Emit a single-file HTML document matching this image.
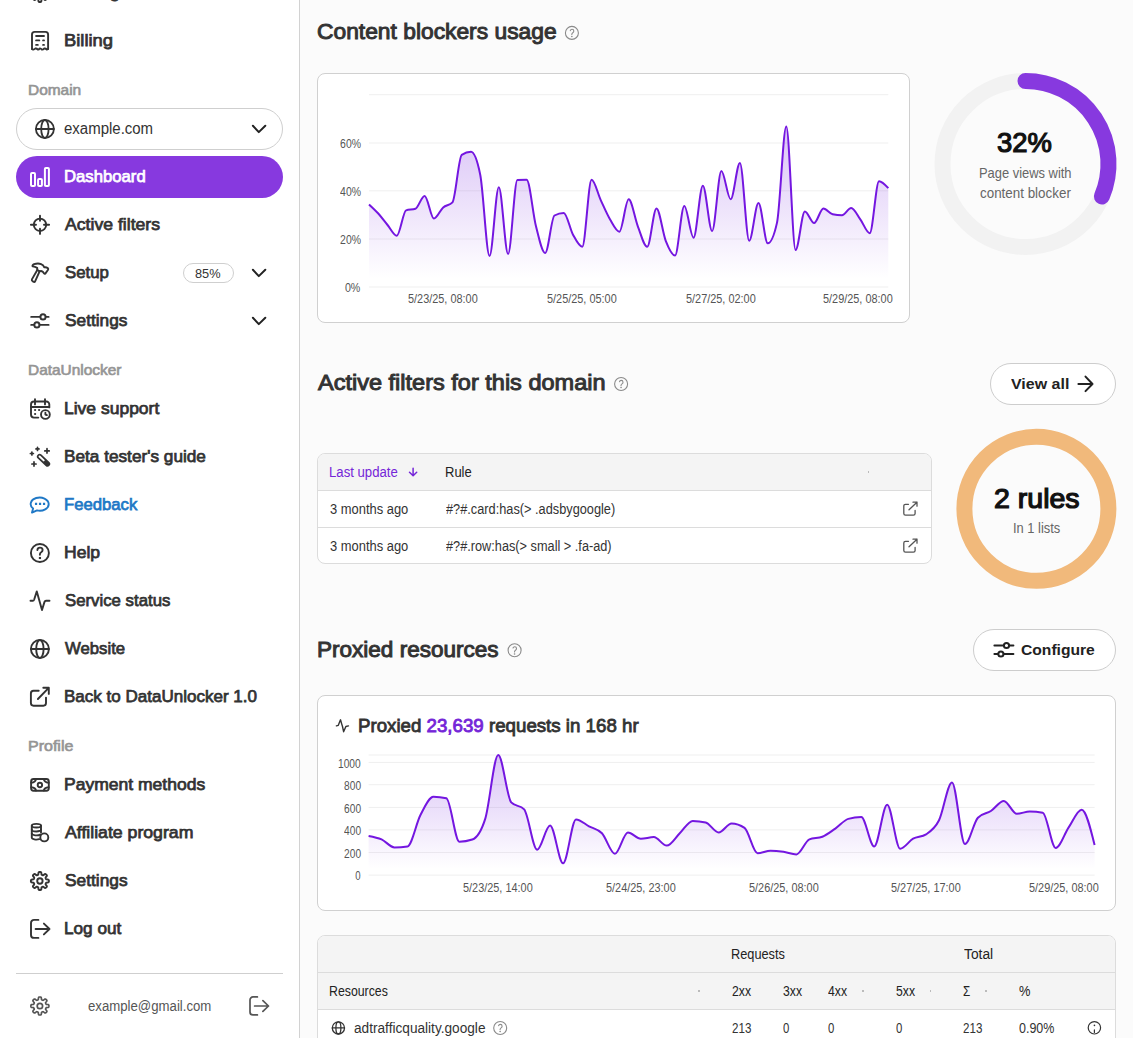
<!DOCTYPE html><html><head><meta charset="utf-8"><style>html,body{margin:0;padding:0}body{width:1133px;height:1038px;overflow:hidden;position:relative;background:#fbfbfb;font-family:'Liberation Sans', sans-serif}</style></head><body><div style="position:absolute;left:0;top:0;width:299px;height:1038px;background:#fff;border-right:1px solid #d2d2d2"></div><svg style="position:absolute;left:26px;top:-22px;overflow:visible" width="28" height="28" viewBox="0 0 28 28" fill="none" stroke="#333333" stroke-width="1.9" stroke-linecap="round" stroke-linejoin="round"><path d="M13.90,6.00L14.25,6.01L14.60,6.05L14.95,6.17L15.24,6.53L15.40,7.45L15.49,8.36L15.67,8.74L15.89,8.89L16.12,8.99L16.35,9.09L16.58,9.18L16.82,9.28L17.08,9.33L17.47,9.18L18.18,8.60L18.94,8.06L19.41,8.01L19.73,8.17L20.01,8.39L20.26,8.64L20.51,8.89L20.73,9.17L20.89,9.49L20.84,9.96L20.30,10.72L19.72,11.43L19.57,11.82L19.62,12.08L19.72,12.32L19.81,12.55L19.91,12.78L20.01,13.01L20.16,13.23L20.54,13.41L21.45,13.50L22.37,13.66L22.73,13.95L22.85,14.30L22.89,14.65L22.90,15.00L22.89,15.35L22.85,15.70L22.73,16.05L22.37,16.34L21.45,16.50L20.54,16.59L20.16,16.77L20.01,16.99L19.91,17.22L19.81,17.45L19.72,17.68L19.62,17.92L19.57,18.18L19.72,18.57L20.30,19.28L20.84,20.04L20.89,20.51L20.73,20.83L20.51,21.11L20.26,21.36L20.01,21.61L19.73,21.83L19.41,21.99L18.94,21.94L18.18,21.40L17.47,20.82L17.08,20.67L16.82,20.72L16.58,20.82L16.35,20.91L16.12,21.01L15.89,21.11L15.67,21.26L15.49,21.64L15.40,22.55L15.24,23.47L14.95,23.83L14.60,23.95L14.25,23.99L13.90,24.00L13.55,23.99L13.20,23.95L12.85,23.83L12.56,23.47L12.40,22.55L12.31,21.64L12.13,21.26L11.91,21.11L11.68,21.01L11.45,20.91L11.22,20.82L10.98,20.72L10.72,20.67L10.33,20.82L9.62,21.40L8.86,21.94L8.39,21.99L8.07,21.83L7.79,21.61L7.54,21.36L7.29,21.11L7.07,20.83L6.91,20.51L6.96,20.04L7.50,19.28L8.08,18.57L8.23,18.18L8.18,17.92L8.08,17.68L7.99,17.45L7.89,17.22L7.79,16.99L7.64,16.77L7.26,16.59L6.35,16.50L5.43,16.34L5.07,16.05L4.95,15.70L4.91,15.35L4.90,15.00L4.91,14.65L4.95,14.30L5.07,13.95L5.43,13.66L6.35,13.50L7.26,13.41L7.64,13.23L7.79,13.01L7.89,12.78L7.99,12.55L8.08,12.32L8.18,12.08L8.23,11.82L8.08,11.43L7.50,10.72L6.96,9.96L6.91,9.49L7.07,9.17L7.29,8.89L7.54,8.64L7.79,8.39L8.07,8.17L8.39,8.01L8.86,8.06L9.62,8.60L10.33,9.18L10.72,9.33L10.98,9.28L11.22,9.18L11.45,9.09L11.68,8.99L11.91,8.89L12.13,8.74L12.31,8.36L12.40,7.45L12.56,6.53L12.85,6.17L13.20,6.05L13.55,6.01Z"/><circle cx="13.9" cy="15" r="2.7"/></svg><svg style="position:absolute;left:26px;top:26px;overflow:visible" width="28" height="28" viewBox="0 0 28 28" fill="none" stroke="#333333" stroke-width="1.9" stroke-linecap="round" stroke-linejoin="round"><path d="M6,23V8.5a2.6,2.6 0 0 1 2.6,-2.6H19.5a2.6,2.6 0 0 1 2.6,2.6V23"/><path d="M22.1,23L20.8,23.6Q19.6,22.2 18.3,22.5Q17,23.8 15.9,23.6Q14.8,22.2 13.8,22.4Q12.8,23.8 11.9,23.6Q10.6,22.2 9.3,22.5Q8.2,23.8 7.1,23.6L6,23"/><path d="M10.1,10H18M10.1,14.4H13.3M17.1,14.4H18M10.1,18.9H11.8M17.1,18.9H18"/></svg><div style="position:absolute;left:16px;top:108px;width:265px;height:40px;border:1px solid #cfcfcf;border-radius:21px;background:#fff"></div><svg style="position:absolute;left:31.1px;top:114px;overflow:visible" width="28" height="28" viewBox="0 0 28 28" fill="none" stroke="#333333" stroke-width="1.8" stroke-linecap="round" stroke-linejoin="round"><circle cx="13.9" cy="15" r="9"/><path d="M5,15H22.8"/><ellipse cx="13.9" cy="15" rx="3.7" ry="9"/></svg><svg style="position:absolute;left:244px;top:112px;overflow:visible" width="28" height="28" viewBox="0 0 28 28" fill="none" stroke="#222" stroke-width="2" stroke-linecap="round" stroke-linejoin="round"><path d="M8.9,13.8L14.8,20.1L21.3,13.8"/></svg><div style="position:absolute;left:16px;top:156px;width:267px;height:42px;border-radius:21px;background:#8739df"></div><svg style="position:absolute;left:26px;top:163px;overflow:visible" width="28" height="28" viewBox="0 0 28 28" fill="none" stroke="#fff" stroke-width="2" stroke-linecap="round" stroke-linejoin="round"><rect x="5" y="9.9" width="4" height="13" rx="1"/><rect x="12.1" y="16" width="3.8" height="6.9" rx="1"/><rect x="18.9" y="5" width="4" height="17.9" rx="1"/></svg><svg style="position:absolute;left:26px;top:210px;overflow:visible" width="28" height="28" viewBox="0 0 28 28" fill="none" stroke="#333333" stroke-width="1.9" stroke-linecap="round" stroke-linejoin="round"><circle cx="14" cy="14.8" r="6.2"/><path d="M14,5.7V10.8M14,18.8V23.9M4.9,14.8H10M18,14.8H23.1"/></svg><svg style="position:absolute;left:26px;top:258px;overflow:visible" width="28" height="28" viewBox="0 0 28 28" fill="none" stroke="#333333" stroke-width="1.9" stroke-linecap="round" stroke-linejoin="round"><path d="M11.3,12L11.2,9.8Q9,8.9 6.8,8.4Q5.6,7.6 8.1,6.2Q12,4.8 15.1,6.1Q17.6,7.2 18.2,9.3Q20.2,8.9 22,10.3Q22.6,11 21.9,12L19.3,15.6Q18.7,16.2 18.1,15.5L16.7,13.7Q15.3,12.5 13.6,13.3Z"/><path d="M11.3,12L5.9,21.4Q5.4,22.7 6.8,23.4L7.8,23.9Q8.7,24.2 9.1,23.3L13.6,13.3"/></svg><div style="position:absolute;left:182.5px;top:263px;width:49px;height:18px;border:1px solid #cfcfcf;border-radius:10px;background:#fff"></div><svg style="position:absolute;left:244px;top:256px;overflow:visible" width="28" height="28" viewBox="0 0 28 28" fill="none" stroke="#222" stroke-width="2" stroke-linecap="round" stroke-linejoin="round"><path d="M8.9,13.8L14.8,20.1L21.3,13.8"/></svg><svg style="position:absolute;left:26px;top:306px;overflow:visible" width="28" height="28" viewBox="0 0 28 28" fill="none" stroke="#333333" stroke-width="1.9" stroke-linecap="round" stroke-linejoin="round"><path d="M5.2,10.9H14.3M19.7,10.9H22.6M5.2,18.9H8.3M13.5,18.9H22.6"/><circle cx="17" cy="10.9" r="2.6"/><circle cx="10.9" cy="18.9" r="2.6"/></svg><svg style="position:absolute;left:244px;top:304px;overflow:visible" width="28" height="28" viewBox="0 0 28 28" fill="none" stroke="#222" stroke-width="2" stroke-linecap="round" stroke-linejoin="round"><path d="M8.9,13.8L14.8,20.1L21.3,13.8"/></svg><svg style="position:absolute;left:26px;top:394px;overflow:visible" width="28" height="28" viewBox="0 0 28 28" fill="none" stroke="#333333" stroke-width="1.9" stroke-linecap="round" stroke-linejoin="round"><path d="M12.3,23.6H8a3,3 0 0 1 -3,-3V10.5a3,3 0 0 1 3,-3H20.4a2.9,2.9 0 0 1 2.9,2.9V13.4"/><path d="M9,5.2V10.4M19,5.2V10.4M5,13H23.2"/><circle cx="19.4" cy="20.5" r="4.4"/><path d="M19.4,18.7V20.5L20.9,21.1"/><path d="M9,15.9h.2M13,15.9h.2M9,20h.2" stroke-width="2"/></svg><svg style="position:absolute;left:26px;top:442px;overflow:visible" width="28" height="28" viewBox="0 0 28 28" fill="none" stroke="#333333" stroke-width="1.9" stroke-linecap="round" stroke-linejoin="round"><path d="M13.6,14.5L21.5,22" stroke-width="5.4"/><path d="M13.6,14.5L17.7,18.4" stroke="#fff" stroke-width="2"/><path d="M10.0,6.9H13.0M11.5,5.4V8.400000000000002" stroke-width="1.7"/><path d="M18.8,8.9H23.2M21,6.7V11.100000000000001" stroke-width="1.7"/><path d="M4.4,11.5H7.400000000000001M5.9,10.0V13.0" stroke-width="1.7"/><path d="M5.9,22H10.100000000000001M8,19.9V24.1" stroke-width="1.7"/></svg><svg style="position:absolute;left:26px;top:490px;overflow:visible" width="28" height="28" viewBox="0 0 28 28" fill="none" stroke="#1f78c6" stroke-width="1.9" stroke-linecap="round" stroke-linejoin="round"><path d="M11,20.4A9,6.6 0 1 0 7.1,18.6L6,22.6Z"/><path d="M10,13.9h.1M14,13.9h.1M18,13.9h.1" stroke-width="2.1" stroke-linecap="square"/></svg><svg style="position:absolute;left:26px;top:538px;overflow:visible" width="28" height="28" viewBox="0 0 28 28" fill="none" stroke="#333333" stroke-width="1.9" stroke-linecap="round" stroke-linejoin="round"><circle cx="13.9" cy="15" r="9"/><path d="M11.4,12Q11.6,9.6 13.9,9.6Q16.5,9.6 16.6,11.9Q16.6,13.3 15.2,14.2Q13.9,15 13.9,16.4V16.8"/><path d="M13.9,20h.1" stroke-width="2.1" stroke-linecap="square"/></svg><svg style="position:absolute;left:26px;top:586px;overflow:visible" width="28" height="28" viewBox="0 0 28 28" fill="none" stroke="#333333" stroke-width="1.9" stroke-linecap="round" stroke-linejoin="round"><path d="M4.5,14.8H6.8Q7.7,14.8 8.1,13.7L10.8,5.4L16,24L18.5,15.9Q18.9,14.8 20,14.8H23.5"/></svg><svg style="position:absolute;left:26px;top:634px;overflow:visible" width="28" height="28" viewBox="0 0 28 28" fill="none" stroke="#333333" stroke-width="1.9" stroke-linecap="round" stroke-linejoin="round"><circle cx="13.9" cy="15" r="9"/><path d="M5,15H22.8"/><ellipse cx="13.9" cy="15" rx="3.7" ry="9"/></svg><svg style="position:absolute;left:26px;top:682px;overflow:visible" width="28" height="28" viewBox="0 0 28 28" fill="none" stroke="#333333" stroke-width="1.9" stroke-linecap="round" stroke-linejoin="round"><path d="M12.7,8.8H7.5a2.6,2.6 0 0 0 -2.6,2.6V21.1a2.6,2.6 0 0 0 2.6,2.6H17.4a2.6,2.6 0 0 0 2.6,-2.6V15.6"/><path d="M11.9,17L22.7,5.9M17.3,5.8H22.8V11.9"/></svg><svg style="position:absolute;left:26px;top:770px;overflow:visible" width="28" height="28" viewBox="0 0 28 28" fill="none" stroke="#333333" stroke-width="1.9" stroke-linecap="round" stroke-linejoin="round"><rect x="5.1" y="9" width="17.7" height="11.7" rx="2.5"/><circle cx="13.9" cy="15" r="2.2"/><path d="M10,9.2Q9.5,12.4 5.3,12.7M17.8,9.2Q18.3,12.4 22.6,12.7M10,20.5Q9.5,17.5 5.3,17.2M17.8,20.5Q18.3,17.5 22.6,17.2"/></svg><svg style="position:absolute;left:26px;top:818px;overflow:visible" width="28" height="28" viewBox="0 0 28 28" fill="none" stroke="#333333" stroke-width="1.9" stroke-linecap="round" stroke-linejoin="round"><ellipse cx="10.4" cy="7.7" rx="4.6" ry="1.8"/><path d="M5.8,7.7V19.8A4.6,1.8 0 0 0 13.2,21.2M15,7.7V14.6"/><path d="M5.8,11.7A4.6,1.8 0 0 0 15,11.7M5.8,15.7A4.6,1.8 0 0 0 14.2,16.6"/><circle cx="18.3" cy="19.4" r="4"/></svg><svg style="position:absolute;left:26px;top:866px;overflow:visible" width="28" height="28" viewBox="0 0 28 28" fill="none" stroke="#333333" stroke-width="1.9" stroke-linecap="round" stroke-linejoin="round"><path d="M13.90,6.00L14.25,6.01L14.60,6.05L14.95,6.17L15.24,6.53L15.40,7.45L15.49,8.36L15.67,8.74L15.89,8.89L16.12,8.99L16.35,9.09L16.58,9.18L16.82,9.28L17.08,9.33L17.47,9.18L18.18,8.60L18.94,8.06L19.41,8.01L19.73,8.17L20.01,8.39L20.26,8.64L20.51,8.89L20.73,9.17L20.89,9.49L20.84,9.96L20.30,10.72L19.72,11.43L19.57,11.82L19.62,12.08L19.72,12.32L19.81,12.55L19.91,12.78L20.01,13.01L20.16,13.23L20.54,13.41L21.45,13.50L22.37,13.66L22.73,13.95L22.85,14.30L22.89,14.65L22.90,15.00L22.89,15.35L22.85,15.70L22.73,16.05L22.37,16.34L21.45,16.50L20.54,16.59L20.16,16.77L20.01,16.99L19.91,17.22L19.81,17.45L19.72,17.68L19.62,17.92L19.57,18.18L19.72,18.57L20.30,19.28L20.84,20.04L20.89,20.51L20.73,20.83L20.51,21.11L20.26,21.36L20.01,21.61L19.73,21.83L19.41,21.99L18.94,21.94L18.18,21.40L17.47,20.82L17.08,20.67L16.82,20.72L16.58,20.82L16.35,20.91L16.12,21.01L15.89,21.11L15.67,21.26L15.49,21.64L15.40,22.55L15.24,23.47L14.95,23.83L14.60,23.95L14.25,23.99L13.90,24.00L13.55,23.99L13.20,23.95L12.85,23.83L12.56,23.47L12.40,22.55L12.31,21.64L12.13,21.26L11.91,21.11L11.68,21.01L11.45,20.91L11.22,20.82L10.98,20.72L10.72,20.67L10.33,20.82L9.62,21.40L8.86,21.94L8.39,21.99L8.07,21.83L7.79,21.61L7.54,21.36L7.29,21.11L7.07,20.83L6.91,20.51L6.96,20.04L7.50,19.28L8.08,18.57L8.23,18.18L8.18,17.92L8.08,17.68L7.99,17.45L7.89,17.22L7.79,16.99L7.64,16.77L7.26,16.59L6.35,16.50L5.43,16.34L5.07,16.05L4.95,15.70L4.91,15.35L4.90,15.00L4.91,14.65L4.95,14.30L5.07,13.95L5.43,13.66L6.35,13.50L7.26,13.41L7.64,13.23L7.79,13.01L7.89,12.78L7.99,12.55L8.08,12.32L8.18,12.08L8.23,11.82L8.08,11.43L7.50,10.72L6.96,9.96L6.91,9.49L7.07,9.17L7.29,8.89L7.54,8.64L7.79,8.39L8.07,8.17L8.39,8.01L8.86,8.06L9.62,8.60L10.33,9.18L10.72,9.33L10.98,9.28L11.22,9.18L11.45,9.09L11.68,8.99L11.91,8.89L12.13,8.74L12.31,8.36L12.40,7.45L12.56,6.53L12.85,6.17L13.20,6.05L13.55,6.01Z"/><circle cx="13.9" cy="15" r="2.7"/></svg><svg style="position:absolute;left:26px;top:914px;overflow:visible" width="28" height="28" viewBox="0 0 28 28" fill="none" stroke="#333333" stroke-width="1.9" stroke-linecap="round" stroke-linejoin="round"><path d="M12.4,5.9H8a3,3 0 0 0 -3,3V20.9a3,3 0 0 0 3,3H12.4"/><path d="M9.6,15H23.5M17.9,9.6L23.5,15L17.9,20.4"/></svg><div style="position:absolute;left:16px;top:973px;width:267px;height:1px;background:#cfcfcf"></div><svg style="position:absolute;left:26px;top:991.2px;overflow:visible" width="28" height="28" viewBox="0 0 28 28" fill="none" stroke="#555" stroke-width="1.7" stroke-linecap="round" stroke-linejoin="round"><path d="M13.90,6.00L14.25,6.01L14.60,6.05L14.95,6.17L15.24,6.53L15.40,7.45L15.49,8.36L15.67,8.74L15.89,8.89L16.12,8.99L16.35,9.09L16.58,9.18L16.82,9.28L17.08,9.33L17.47,9.18L18.18,8.60L18.94,8.06L19.41,8.01L19.73,8.17L20.01,8.39L20.26,8.64L20.51,8.89L20.73,9.17L20.89,9.49L20.84,9.96L20.30,10.72L19.72,11.43L19.57,11.82L19.62,12.08L19.72,12.32L19.81,12.55L19.91,12.78L20.01,13.01L20.16,13.23L20.54,13.41L21.45,13.50L22.37,13.66L22.73,13.95L22.85,14.30L22.89,14.65L22.90,15.00L22.89,15.35L22.85,15.70L22.73,16.05L22.37,16.34L21.45,16.50L20.54,16.59L20.16,16.77L20.01,16.99L19.91,17.22L19.81,17.45L19.72,17.68L19.62,17.92L19.57,18.18L19.72,18.57L20.30,19.28L20.84,20.04L20.89,20.51L20.73,20.83L20.51,21.11L20.26,21.36L20.01,21.61L19.73,21.83L19.41,21.99L18.94,21.94L18.18,21.40L17.47,20.82L17.08,20.67L16.82,20.72L16.58,20.82L16.35,20.91L16.12,21.01L15.89,21.11L15.67,21.26L15.49,21.64L15.40,22.55L15.24,23.47L14.95,23.83L14.60,23.95L14.25,23.99L13.90,24.00L13.55,23.99L13.20,23.95L12.85,23.83L12.56,23.47L12.40,22.55L12.31,21.64L12.13,21.26L11.91,21.11L11.68,21.01L11.45,20.91L11.22,20.82L10.98,20.72L10.72,20.67L10.33,20.82L9.62,21.40L8.86,21.94L8.39,21.99L8.07,21.83L7.79,21.61L7.54,21.36L7.29,21.11L7.07,20.83L6.91,20.51L6.96,20.04L7.50,19.28L8.08,18.57L8.23,18.18L8.18,17.92L8.08,17.68L7.99,17.45L7.89,17.22L7.79,16.99L7.64,16.77L7.26,16.59L6.35,16.50L5.43,16.34L5.07,16.05L4.95,15.70L4.91,15.35L4.90,15.00L4.91,14.65L4.95,14.30L5.07,13.95L5.43,13.66L6.35,13.50L7.26,13.41L7.64,13.23L7.79,13.01L7.89,12.78L7.99,12.55L8.08,12.32L8.18,12.08L8.23,11.82L8.08,11.43L7.50,10.72L6.96,9.96L6.91,9.49L7.07,9.17L7.29,8.89L7.54,8.64L7.79,8.39L8.07,8.17L8.39,8.01L8.86,8.06L9.62,8.60L10.33,9.18L10.72,9.33L10.98,9.28L11.22,9.18L11.45,9.09L11.68,8.99L11.91,8.89L12.13,8.74L12.31,8.36L12.40,7.45L12.56,6.53L12.85,6.17L13.20,6.05L13.55,6.01Z"/><circle cx="13.9" cy="15" r="2.7"/></svg><svg style="position:absolute;left:245px;top:991px;overflow:visible" width="28" height="28" viewBox="0 0 28 28" fill="none" stroke="#555" stroke-width="1.7" stroke-linecap="round" stroke-linejoin="round"><path d="M12.4,5.9H8a3,3 0 0 0 -3,3V20.9a3,3 0 0 0 3,3H12.4"/><path d="M9.6,15H23.5M17.9,9.6L23.5,15L17.9,20.4"/></svg><svg style="position:absolute;left:0;top:0" width="1133" height="1038" viewBox="0 0 1133 1038" fill="none" stroke="#8a8a8a" stroke-width="1.1" stroke-linecap="round" stroke-linejoin="round"><circle cx="571.9" cy="32.9" r="6.5"/><path d="M570.30,30.60Q570.70,29.30 572.00,29.30Q573.80,29.30 573.80,31.10Q573.80,32.20 572.80,32.80Q571.80,33.40 571.80,34.50"/><path d="M571.80,36.50h.1" stroke-width="1.54"/></svg><div style="position:absolute;left:317px;top:73px;width:591px;height:248px;border:1px solid #d0d0d0;border-radius:8px;background:#fff"></div><svg style="position:absolute;left:0;top:0" width="1133" height="1038" viewBox="0 0 1133 1038" fill="none" stroke="#8a8a8a" stroke-width="1.1" stroke-linecap="round" stroke-linejoin="round"><circle cx="621.1" cy="384" r="6.5"/><path d="M619.50,381.70Q619.90,380.40 621.20,380.40Q623.00,380.40 623.00,382.20Q623.00,383.30 622.00,383.90Q621.00,384.50 621.00,385.60"/><path d="M621.00,387.60h.1" stroke-width="1.54"/></svg><div style="position:absolute;left:990px;top:363px;width:124px;height:40px;border:1px solid #cdcdcd;border-radius:21px;background:#fff"></div><svg style="position:absolute;left:0;top:0" width="1133" height="1038" viewBox="0 0 1133 1038" fill="none" stroke="#222" stroke-width="2" stroke-linecap="round" stroke-linejoin="round"><path d="M1078.4,384H1092.5M1085.5,376.6L1092.5,384L1085.5,391.1"/></svg><div style="position:absolute;left:317px;top:453px;width:613px;height:109px;border:1px solid #dcdcdc;border-radius:8px;background:#fff;overflow:hidden"><div style="position:absolute;left:0;top:0;width:100%;height:36px;background:#f4f4f4;border-bottom:1px solid #dcdcdc"></div><div style="position:absolute;left:0;top:73px;width:100%;height:1px;background:#dcdcdc"></div></div><div style="position:absolute;left:867.5px;top:471px;width:1.5px;height:1.5px;background:#bbb"></div><svg style="position:absolute;left:0;top:0" width="1133" height="1038" viewBox="0 0 1133 1038" fill="none" stroke="#7526d8" stroke-width="1.5" stroke-linecap="round" stroke-linejoin="round"><path d="M413.1,468.3V475.5M409.5,472.2L413.1,475.7L416.7,472.2"/></svg><svg style="position:absolute;left:0;top:0" width="1133" height="1038" viewBox="0 0 1133 1038" fill="none" stroke="#555" stroke-width="1.3" stroke-linecap="round" stroke-linejoin="round"><path d="M908.5,504.3H905.5a1.7,1.7 0 0 0 -1.7,1.7V513.4a1.7,1.7 0 0 0 1.7,1.7H913.4a1.7,1.7 0 0 0 1.7,-1.7V510.5M909,509.8L917,502.2M913,502.2H917V506.2"/></svg><svg style="position:absolute;left:0;top:0" width="1133" height="1038" viewBox="0 0 1133 1038" fill="none" stroke="#555" stroke-width="1.3" stroke-linecap="round" stroke-linejoin="round"><path d="M908.5,541.3H905.5a1.7,1.7 0 0 0 -1.7,1.7V550.4a1.7,1.7 0 0 0 1.7,1.7H913.4a1.7,1.7 0 0 0 1.7,-1.7V547.5M909,546.8L917,539.2M913,539.2H917V543.2"/></svg><svg style="position:absolute;left:0;top:0" width="1133" height="1038" viewBox="0 0 1133 1038" fill="none" stroke="#8a8a8a" stroke-width="1.1" stroke-linecap="round" stroke-linejoin="round"><circle cx="514.6" cy="650.3" r="6.5"/><path d="M513.00,648.00Q513.40,646.70 514.70,646.70Q516.50,646.70 516.50,648.50Q516.50,649.60 515.50,650.20Q514.50,650.80 514.50,651.90"/><path d="M514.50,653.90h.1" stroke-width="1.54"/></svg><div style="position:absolute;left:973px;top:629px;width:141px;height:40px;border:1px solid #cdcdcd;border-radius:21px;background:#fff"></div><svg style="position:absolute;left:0;top:0" width="1133" height="1038" viewBox="0 0 1133 1038" fill="none" stroke="#222" stroke-width="2" stroke-linecap="round" stroke-linejoin="round"><path d="M994.4,645.5H1003.8M1009.3,645.5H1013.4M994.4,654H998.2M1003.6,654H1013.4"/><circle cx="1006.5" cy="645.5" r="2.6"/><circle cx="1000.9" cy="654" r="2.6"/></svg><div style="position:absolute;left:317px;top:695px;width:797px;height:214px;border:1px solid #d0d0d0;border-radius:8px;background:#fff"></div><svg style="position:absolute;left:0;top:0" width="1133" height="1038" viewBox="0 0 1133 1038" fill="none" stroke="#333" stroke-width="1.4" stroke-linecap="round" stroke-linejoin="round"><path d="M336.4,725.9L338.3,725.3L340.5,719.8L341.6,723.6L342.5,726.5L343.6,731.7L345.9,726.5L348.5,725.9"/></svg><div style="position:absolute;left:317px;top:935px;width:797px;height:120px;border:1px solid #dcdcdc;border-radius:8px;background:#fff;overflow:hidden"><div style="position:absolute;left:0;top:0;width:100%;height:73px;background:#f4f4f4;border-bottom:1px solid #dcdcdc"></div><div style="position:absolute;left:0;top:36px;width:100%;height:1px;background:#dcdcdc"></div></div><div style="position:absolute;left:698.3px;top:990px;width:1.5px;height:1.5px;background:#bbb"></div><div style="position:absolute;left:862.3px;top:990px;width:1.5px;height:1.5px;background:#bbb"></div><div style="position:absolute;left:929.5px;top:990px;width:1.5px;height:1.5px;background:#bbb"></div><div style="position:absolute;left:985.3px;top:990px;width:1.5px;height:1.5px;background:#bbb"></div><svg style="position:absolute;left:0;top:0" width="1133" height="1038" viewBox="0 0 1133 1038" fill="none" stroke="#333" stroke-width="1.3" stroke-linecap="round" stroke-linejoin="round"><circle cx="338.4" cy="1027.9" r="6.1"/><path d="M332.3,1027.9H344.5"/><ellipse cx="338.4" cy="1027.9" rx="2.5" ry="6.1"/></svg><svg style="position:absolute;left:0;top:0" width="1133" height="1038" viewBox="0 0 1133 1038" fill="none" stroke="#8a8a8a" stroke-width="1.1" stroke-linecap="round" stroke-linejoin="round"><circle cx="500.2" cy="1028" r="6.5"/><path d="M498.60,1025.70Q499.00,1024.40 500.30,1024.40Q502.10,1024.40 502.10,1026.20Q502.10,1027.30 501.10,1027.90Q500.10,1028.50 500.10,1029.60"/><path d="M500.10,1031.60h.1" stroke-width="1.54"/></svg><svg style="position:absolute;left:0;top:0" width="1133" height="1038" viewBox="0 0 1133 1038" fill="none" stroke="#333" stroke-width="1.2" stroke-linecap="round" stroke-linejoin="round"><circle cx="1094.4" cy="1027.8" r="6.2"/><path d="M1094.4,1032.4V1029.9"/><path d="M1094.4,1025.4h.05" stroke-width="1.6"/></svg><svg style="position:absolute;left:0;top:0" width="1133" height="1038" viewBox="0 0 1133 1038"><defs><linearGradient id="g1" x1="0" y1="0" x2="0" y2="1"><stop offset="0%" stop-color="#7a2ae0" stop-opacity="0.28"/><stop offset="95%" stop-color="#7a2ae0" stop-opacity="0"/></linearGradient><linearGradient id="g2" x1="0" y1="0" x2="0" y2="1"><stop offset="0%" stop-color="#7a2ae0" stop-opacity="0.28"/><stop offset="95%" stop-color="#7a2ae0" stop-opacity="0"/></linearGradient></defs><line x1="369.0" x2="888.3" y1="94.7" y2="94.7" stroke="#efefef" stroke-width="1"/><line x1="369.0" x2="888.3" y1="143" y2="143" stroke="#efefef" stroke-width="1"/><line x1="369.0" x2="888.3" y1="190.8" y2="190.8" stroke="#efefef" stroke-width="1"/><line x1="369.0" x2="888.3" y1="239" y2="239" stroke="#efefef" stroke-width="1"/><line x1="369.0" x2="888.3" y1="287" y2="287" stroke="#efefef" stroke-width="1"/><line x1="368.6" x2="1094.6" y1="755" y2="755" stroke="#efefef" stroke-width="1"/><line x1="368.6" x2="1094.6" y1="762.4" y2="762.4" stroke="#efefef" stroke-width="1"/><line x1="368.6" x2="1094.6" y1="784.7" y2="784.7" stroke="#efefef" stroke-width="1"/><line x1="368.6" x2="1094.6" y1="807.4" y2="807.4" stroke="#efefef" stroke-width="1"/><line x1="368.6" x2="1094.6" y1="829.9" y2="829.9" stroke="#efefef" stroke-width="1"/><line x1="368.6" x2="1094.6" y1="852.5" y2="852.5" stroke="#efefef" stroke-width="1"/><line x1="368.6" x2="1094.6" y1="875.1" y2="875.1" stroke="#efefef" stroke-width="1"/><path d="M369.00,204.40C372.09,207.23,375.18,210.07,378.27,213.50C381.36,216.93,384.46,221.30,387.55,225.00C390.64,228.70,393.73,235.70,396.82,235.70C399.91,235.70,403.00,211.47,406.09,210.40C409.18,209.33,412.28,209.87,415.37,208.80C418.46,207.73,421.55,195.90,424.64,195.90C427.73,195.90,430.82,218.50,433.91,218.50C437.00,218.50,440.09,210.10,443.19,207.40C446.28,204.70,449.37,205.70,452.46,202.30C455.55,198.90,458.64,156.80,461.73,154.80C464.82,152.80,467.91,151.80,471.01,151.80C474.10,151.80,477.19,159.53,480.28,175.00C483.37,190.47,486.46,256.00,489.55,256.00C492.64,256.00,495.73,187.20,498.82,187.20C501.92,187.20,505.01,254.00,508.10,254.00C511.19,254.00,514.28,180.20,517.37,180.00C520.46,179.80,523.55,179.70,526.64,179.70C529.74,179.70,532.83,213.78,535.92,226.00C539.01,238.22,542.10,253.00,545.19,253.00C548.28,253.00,551.37,217.23,554.46,215.50C557.56,213.77,560.65,212.90,563.74,212.90C566.83,212.90,569.92,229.05,573.01,234.70C576.10,240.35,579.19,246.80,582.28,246.80C585.38,246.80,588.47,179.70,591.56,179.70C594.65,179.70,597.74,193.67,600.83,200.30C603.92,206.93,607.01,214.27,610.10,219.50C613.19,224.73,616.29,231.70,619.38,231.70C622.47,231.70,625.56,199.30,628.65,199.30C631.74,199.30,634.83,218.68,637.92,226.60C641.01,234.52,644.11,246.80,647.20,246.80C650.29,246.80,653.38,208.40,656.47,208.40C659.56,208.40,662.65,232.95,665.74,240.80C668.83,248.65,671.92,255.50,675.02,255.50C678.11,255.50,681.20,206.00,684.29,206.00C687.38,206.00,690.47,237.70,693.56,237.70C696.65,237.70,699.74,185.70,702.84,185.70C705.93,185.70,709.02,231.00,712.11,231.00C715.20,231.00,718.29,171.00,721.38,171.00C724.47,171.00,727.56,199.30,730.66,199.30C733.75,199.30,736.84,162.90,739.93,162.90C743.02,162.90,746.11,240.80,749.20,240.80C752.29,240.80,755.38,203.00,758.47,203.00C761.57,203.00,764.66,243.30,767.75,243.30C770.84,243.30,773.93,236.40,777.02,222.60C780.11,208.80,783.20,126.50,786.29,126.50C789.39,126.50,792.48,250.00,795.57,250.00C798.66,250.00,801.75,211.50,804.84,211.50C807.93,211.50,811.02,223.00,814.11,223.00C817.21,223.00,820.30,208.50,823.39,208.50C826.48,208.50,829.57,213.53,832.66,214.20C835.75,214.87,838.84,215.20,841.93,215.20C845.02,215.20,848.12,207.90,851.21,207.90C854.30,207.90,857.39,215.38,860.48,219.60C863.57,223.82,866.66,233.20,869.75,233.20C872.84,233.20,875.94,181.20,879.03,181.20C882.12,181.20,885.21,184.70,888.30,188.20L888.3,287L369.0,287Z" fill="url(#g1)"/><path d="M369.00,204.40C372.09,207.23,375.18,210.07,378.27,213.50C381.36,216.93,384.46,221.30,387.55,225.00C390.64,228.70,393.73,235.70,396.82,235.70C399.91,235.70,403.00,211.47,406.09,210.40C409.18,209.33,412.28,209.87,415.37,208.80C418.46,207.73,421.55,195.90,424.64,195.90C427.73,195.90,430.82,218.50,433.91,218.50C437.00,218.50,440.09,210.10,443.19,207.40C446.28,204.70,449.37,205.70,452.46,202.30C455.55,198.90,458.64,156.80,461.73,154.80C464.82,152.80,467.91,151.80,471.01,151.80C474.10,151.80,477.19,159.53,480.28,175.00C483.37,190.47,486.46,256.00,489.55,256.00C492.64,256.00,495.73,187.20,498.82,187.20C501.92,187.20,505.01,254.00,508.10,254.00C511.19,254.00,514.28,180.20,517.37,180.00C520.46,179.80,523.55,179.70,526.64,179.70C529.74,179.70,532.83,213.78,535.92,226.00C539.01,238.22,542.10,253.00,545.19,253.00C548.28,253.00,551.37,217.23,554.46,215.50C557.56,213.77,560.65,212.90,563.74,212.90C566.83,212.90,569.92,229.05,573.01,234.70C576.10,240.35,579.19,246.80,582.28,246.80C585.38,246.80,588.47,179.70,591.56,179.70C594.65,179.70,597.74,193.67,600.83,200.30C603.92,206.93,607.01,214.27,610.10,219.50C613.19,224.73,616.29,231.70,619.38,231.70C622.47,231.70,625.56,199.30,628.65,199.30C631.74,199.30,634.83,218.68,637.92,226.60C641.01,234.52,644.11,246.80,647.20,246.80C650.29,246.80,653.38,208.40,656.47,208.40C659.56,208.40,662.65,232.95,665.74,240.80C668.83,248.65,671.92,255.50,675.02,255.50C678.11,255.50,681.20,206.00,684.29,206.00C687.38,206.00,690.47,237.70,693.56,237.70C696.65,237.70,699.74,185.70,702.84,185.70C705.93,185.70,709.02,231.00,712.11,231.00C715.20,231.00,718.29,171.00,721.38,171.00C724.47,171.00,727.56,199.30,730.66,199.30C733.75,199.30,736.84,162.90,739.93,162.90C743.02,162.90,746.11,240.80,749.20,240.80C752.29,240.80,755.38,203.00,758.47,203.00C761.57,203.00,764.66,243.30,767.75,243.30C770.84,243.30,773.93,236.40,777.02,222.60C780.11,208.80,783.20,126.50,786.29,126.50C789.39,126.50,792.48,250.00,795.57,250.00C798.66,250.00,801.75,211.50,804.84,211.50C807.93,211.50,811.02,223.00,814.11,223.00C817.21,223.00,820.30,208.50,823.39,208.50C826.48,208.50,829.57,213.53,832.66,214.20C835.75,214.87,838.84,215.20,841.93,215.20C845.02,215.20,848.12,207.90,851.21,207.90C854.30,207.90,857.39,215.38,860.48,219.60C863.57,223.82,866.66,233.20,869.75,233.20C872.84,233.20,875.94,181.20,879.03,181.20C882.12,181.20,885.21,184.70,888.30,188.20" fill="none" stroke="#7416e0" stroke-width="2"/><path d="M368.60,835.90C372.92,836.69,377.24,837.48,381.56,839.40C385.89,841.32,390.21,847.40,394.53,847.40C398.85,847.40,403.17,847.07,407.49,846.40C411.81,845.73,416.14,823.28,420.46,815.00C424.78,806.72,429.10,796.70,433.42,796.70C437.74,796.70,442.06,797.23,446.39,798.30C450.71,799.37,455.03,841.70,459.35,841.70C463.67,841.70,467.99,840.97,472.31,839.50C476.64,838.03,480.96,832.53,485.28,818.60C489.60,804.67,493.92,755.00,498.24,755.00C502.56,755.00,506.89,797.73,511.21,802.40C515.53,807.07,519.85,804.73,524.17,809.40C528.49,814.07,532.81,849.70,537.14,849.70C541.46,849.70,545.78,825.50,550.10,825.50C554.42,825.50,558.74,863.30,563.06,863.30C567.39,863.30,571.71,819.40,576.03,819.40C580.35,819.40,584.67,823.98,588.99,826.30C593.31,828.62,597.64,828.72,601.96,833.30C606.28,837.88,610.60,853.80,614.92,853.80C619.24,853.80,623.56,832.50,627.89,832.50C632.21,832.50,636.53,838.70,640.85,838.70C645.17,838.70,649.49,837.10,653.81,837.10C658.14,837.10,662.46,845.60,666.78,845.60C671.10,845.60,675.42,837.42,679.74,833.30C684.06,829.18,688.39,820.90,692.71,820.90C697.03,820.90,701.35,821.43,705.67,822.50C709.99,823.57,714.31,832.50,718.64,832.50C722.96,832.50,727.28,823.50,731.60,823.50C735.92,823.50,740.24,824.97,744.56,827.90C748.89,830.83,753.21,853.30,757.53,853.30C761.85,853.30,766.17,850.70,770.49,850.70C774.81,850.70,779.14,851.18,783.46,851.80C787.78,852.42,792.10,854.40,796.42,854.40C800.74,854.40,805.06,841.13,809.39,839.40C813.71,837.67,818.03,838.53,822.35,836.80C826.67,835.07,830.99,831.58,835.31,828.60C839.64,825.62,843.96,820.10,848.28,818.90C852.60,817.70,856.92,817.10,861.24,817.10C865.56,817.10,869.89,846.40,874.21,846.40C878.53,846.40,882.85,804.70,887.17,804.70C891.49,804.70,895.81,848.70,900.14,848.70C904.46,848.70,908.78,841.08,913.10,838.70C917.42,836.32,921.74,837.27,926.06,834.40C930.39,831.53,934.71,828.97,939.03,820.30C943.35,811.63,947.67,782.40,951.99,782.40C956.31,782.40,960.64,844.10,964.96,844.10C969.28,844.10,973.60,822.17,977.92,817.70C982.24,813.23,986.56,813.80,990.89,811.00C995.21,808.20,999.53,800.90,1003.85,800.90C1008.17,800.90,1012.49,813.80,1016.81,813.80C1021.14,813.80,1025.46,811.50,1029.78,811.50C1034.10,811.50,1038.42,811.90,1042.74,812.70C1047.06,813.50,1051.39,848.00,1055.71,848.00C1060.03,848.00,1064.35,833.78,1068.67,827.40C1072.99,821.02,1077.31,809.70,1081.64,809.70C1085.96,809.70,1090.28,827.35,1094.60,845.00L1094.6,875L368.6,875Z" fill="url(#g2)"/><path d="M368.60,835.90C372.92,836.69,377.24,837.48,381.56,839.40C385.89,841.32,390.21,847.40,394.53,847.40C398.85,847.40,403.17,847.07,407.49,846.40C411.81,845.73,416.14,823.28,420.46,815.00C424.78,806.72,429.10,796.70,433.42,796.70C437.74,796.70,442.06,797.23,446.39,798.30C450.71,799.37,455.03,841.70,459.35,841.70C463.67,841.70,467.99,840.97,472.31,839.50C476.64,838.03,480.96,832.53,485.28,818.60C489.60,804.67,493.92,755.00,498.24,755.00C502.56,755.00,506.89,797.73,511.21,802.40C515.53,807.07,519.85,804.73,524.17,809.40C528.49,814.07,532.81,849.70,537.14,849.70C541.46,849.70,545.78,825.50,550.10,825.50C554.42,825.50,558.74,863.30,563.06,863.30C567.39,863.30,571.71,819.40,576.03,819.40C580.35,819.40,584.67,823.98,588.99,826.30C593.31,828.62,597.64,828.72,601.96,833.30C606.28,837.88,610.60,853.80,614.92,853.80C619.24,853.80,623.56,832.50,627.89,832.50C632.21,832.50,636.53,838.70,640.85,838.70C645.17,838.70,649.49,837.10,653.81,837.10C658.14,837.10,662.46,845.60,666.78,845.60C671.10,845.60,675.42,837.42,679.74,833.30C684.06,829.18,688.39,820.90,692.71,820.90C697.03,820.90,701.35,821.43,705.67,822.50C709.99,823.57,714.31,832.50,718.64,832.50C722.96,832.50,727.28,823.50,731.60,823.50C735.92,823.50,740.24,824.97,744.56,827.90C748.89,830.83,753.21,853.30,757.53,853.30C761.85,853.30,766.17,850.70,770.49,850.70C774.81,850.70,779.14,851.18,783.46,851.80C787.78,852.42,792.10,854.40,796.42,854.40C800.74,854.40,805.06,841.13,809.39,839.40C813.71,837.67,818.03,838.53,822.35,836.80C826.67,835.07,830.99,831.58,835.31,828.60C839.64,825.62,843.96,820.10,848.28,818.90C852.60,817.70,856.92,817.10,861.24,817.10C865.56,817.10,869.89,846.40,874.21,846.40C878.53,846.40,882.85,804.70,887.17,804.70C891.49,804.70,895.81,848.70,900.14,848.70C904.46,848.70,908.78,841.08,913.10,838.70C917.42,836.32,921.74,837.27,926.06,834.40C930.39,831.53,934.71,828.97,939.03,820.30C943.35,811.63,947.67,782.40,951.99,782.40C956.31,782.40,960.64,844.10,964.96,844.10C969.28,844.10,973.60,822.17,977.92,817.70C982.24,813.23,986.56,813.80,990.89,811.00C995.21,808.20,999.53,800.90,1003.85,800.90C1008.17,800.90,1012.49,813.80,1016.81,813.80C1021.14,813.80,1025.46,811.50,1029.78,811.50C1034.10,811.50,1038.42,811.90,1042.74,812.70C1047.06,813.50,1051.39,848.00,1055.71,848.00C1060.03,848.00,1064.35,833.78,1068.67,827.40C1072.99,821.02,1077.31,809.70,1081.64,809.70C1085.96,809.70,1090.28,827.35,1094.60,845.00" fill="none" stroke="#7416e0" stroke-width="2"/><circle cx="1025.5" cy="164" r="83" fill="none" stroke="#f2f2f2" stroke-width="16"/><path d="M1025.5,81A83,83 0 0 1 1101.88,196.48" fill="none" stroke="#8739df" stroke-width="16" stroke-linecap="round"/><circle cx="1036.4" cy="508.8" r="72" fill="none" stroke="#f1b97b" stroke-width="16"/></svg><div style="position:absolute;top:-15.89px;font-family:'Liberation Sans', sans-serif;font-size:17px;line-height:17px;font-weight:400;-webkit-text-stroke:0.750px currentColor;color:#333333;white-space:pre;left:63.83px;transform:scaleX(1.0730);transform-origin:left center;">Pricing</div><div style="position:absolute;top:32.11px;font-family:'Liberation Sans', sans-serif;font-size:17px;line-height:17px;font-weight:400;-webkit-text-stroke:0.750px currentColor;color:#333333;white-space:pre;left:63.82px;transform:scaleX(1.0817);transform-origin:left center;">Billing</div><div style="position:absolute;top:82.20px;font-family:'Liberation Sans', sans-serif;font-size:15px;line-height:15px;font-weight:400;-webkit-text-stroke:0.662px currentColor;color:#959595;white-space:pre;left:28.01px;transform:scaleX(1.0293);transform-origin:left center;">Domain</div><div style="position:absolute;top:120.76px;font-family:'Liberation Sans', sans-serif;font-size:16px;line-height:16px;font-weight:400;color:#333333;white-space:pre;left:63.50px;transform:scaleX(0.9365);transform-origin:left center;">example.com</div><div style="position:absolute;top:168.11px;font-family:'Liberation Sans', sans-serif;font-size:17px;line-height:17px;font-weight:400;-webkit-text-stroke:0.750px currentColor;color:#fff;white-space:pre;left:64.09px;transform:scaleX(0.9823);transform-origin:left center;">Dashboard</div><div style="position:absolute;top:216.11px;font-family:'Liberation Sans', sans-serif;font-size:17px;line-height:17px;font-weight:400;-webkit-text-stroke:0.750px currentColor;color:#333333;white-space:pre;left:64.89px;transform:scaleX(1.0372);transform-origin:left center;">Active filters</div><div style="position:absolute;top:264.11px;font-family:'Liberation Sans', sans-serif;font-size:17px;line-height:17px;font-weight:400;-webkit-text-stroke:0.750px currentColor;color:#333333;white-space:pre;left:64.87px;transform:scaleX(0.9883);transform-origin:left center;">Setup</div><div style="position:absolute;top:267.00px;font-family:'Liberation Sans', sans-serif;font-size:13px;line-height:13px;font-weight:400;color:#333333;white-space:pre;left:195.00px;transform:scaleX(0.9826);transform-origin:left center;">85%</div><div style="position:absolute;top:312.11px;font-family:'Liberation Sans', sans-serif;font-size:17px;line-height:17px;font-weight:400;-webkit-text-stroke:0.750px currentColor;color:#333333;white-space:pre;left:64.88px;transform:scaleX(1.0166);transform-origin:left center;">Settings</div><div style="position:absolute;top:362.10px;font-family:'Liberation Sans', sans-serif;font-size:15px;line-height:15px;font-weight:400;-webkit-text-stroke:0.662px currentColor;color:#959595;white-space:pre;left:27.71px;transform:scaleX(1.0272);transform-origin:left center;">DataUnlocker</div><div style="position:absolute;top:400.11px;font-family:'Liberation Sans', sans-serif;font-size:17px;line-height:17px;font-weight:400;-webkit-text-stroke:0.750px currentColor;color:#333333;white-space:pre;left:63.86px;transform:scaleX(1.0287);transform-origin:left center;">Live support</div><div style="position:absolute;top:448.11px;font-family:'Liberation Sans', sans-serif;font-size:17px;line-height:17px;font-weight:400;-webkit-text-stroke:0.750px currentColor;color:#333333;white-space:pre;left:63.87px;transform:scaleX(1.0117);transform-origin:left center;">Beta tester's guide</div><div style="position:absolute;top:496.11px;font-family:'Liberation Sans', sans-serif;font-size:17px;line-height:17px;font-weight:400;-webkit-text-stroke:0.750px currentColor;color:#1f78c6;white-space:pre;left:63.89px;transform:scaleX(0.9812);transform-origin:left center;">Feedback</div><div style="position:absolute;top:544.11px;font-family:'Liberation Sans', sans-serif;font-size:17px;line-height:17px;font-weight:400;-webkit-text-stroke:0.750px currentColor;color:#333333;white-space:pre;left:63.85px;transform:scaleX(1.0333);transform-origin:left center;">Help</div><div style="position:absolute;top:592.11px;font-family:'Liberation Sans', sans-serif;font-size:17px;line-height:17px;font-weight:400;-webkit-text-stroke:0.750px currentColor;color:#333333;white-space:pre;left:64.87px;transform:scaleX(0.9868);transform-origin:left center;">Service status</div><div style="position:absolute;top:640.11px;font-family:'Liberation Sans', sans-serif;font-size:17px;line-height:17px;font-weight:400;-webkit-text-stroke:0.750px currentColor;color:#333333;white-space:pre;left:64.87px;transform:scaleX(0.9838);transform-origin:left center;">Website</div><div style="position:absolute;top:688.11px;font-family:'Liberation Sans', sans-serif;font-size:17px;line-height:17px;font-weight:400;-webkit-text-stroke:0.750px currentColor;color:#333333;white-space:pre;left:63.87px;transform:scaleX(1.0013);transform-origin:left center;">Back to DataUnlocker 1.0</div><div style="position:absolute;top:738.10px;font-family:'Liberation Sans', sans-serif;font-size:15px;line-height:15px;font-weight:400;-webkit-text-stroke:0.662px currentColor;color:#959595;white-space:pre;left:27.99px;transform:scaleX(1.0661);transform-origin:left center;">Profile</div><div style="position:absolute;top:776.11px;font-family:'Liberation Sans', sans-serif;font-size:17px;line-height:17px;font-weight:400;-webkit-text-stroke:0.750px currentColor;color:#333333;white-space:pre;left:63.86px;transform:scaleX(1.0304);transform-origin:left center;">Payment methods</div><div style="position:absolute;top:824.11px;font-family:'Liberation Sans', sans-serif;font-size:17px;line-height:17px;font-weight:400;-webkit-text-stroke:0.750px currentColor;color:#333333;white-space:pre;left:64.89px;transform:scaleX(1.0399);transform-origin:left center;">Affiliate program</div><div style="position:absolute;top:872.11px;font-family:'Liberation Sans', sans-serif;font-size:17px;line-height:17px;font-weight:400;-webkit-text-stroke:0.750px currentColor;color:#333333;white-space:pre;left:64.88px;transform:scaleX(1.0182);transform-origin:left center;">Settings</div><div style="position:absolute;top:920.11px;font-family:'Liberation Sans', sans-serif;font-size:17px;line-height:17px;font-weight:400;-webkit-text-stroke:0.750px currentColor;color:#333333;white-space:pre;left:63.87px;transform:scaleX(1.0098);transform-origin:left center;">Log out</div><div style="position:absolute;top:998.65px;font-family:'Liberation Sans', sans-serif;font-size:14px;line-height:14px;font-weight:400;color:#555;white-space:pre;left:88.00px;transform:scaleX(0.9420);transform-origin:left center;">example@gmail.com</div><div style="position:absolute;top:20.77px;font-family:'Liberation Sans', sans-serif;font-size:22.6px;line-height:22.6px;font-weight:400;-webkit-text-stroke:0.997px currentColor;color:#333333;white-space:pre;left:316.79px;transform:scaleX(1.0093);transform-origin:left center;">Content blockers usage</div><div style="position:absolute;top:371.87px;font-family:'Liberation Sans', sans-serif;font-size:22.6px;line-height:22.6px;font-weight:400;-webkit-text-stroke:0.997px currentColor;color:#333333;white-space:pre;left:317.52px;transform:scaleX(1.0409);transform-origin:left center;">Active filters for this domain</div><div style="position:absolute;top:376.18px;font-family:'Liberation Sans', sans-serif;font-size:15.5px;line-height:15.5px;font-weight:700;color:#222;white-space:pre;left:1011.00px;transform:scaleX(1.0307);transform-origin:left center;">View all</div><div style="position:absolute;top:464.95px;font-family:'Liberation Sans', sans-serif;font-size:14px;line-height:14px;font-weight:400;color:#7526d8;white-space:pre;left:328.86px;transform:scaleX(0.9394);transform-origin:left center;">Last update</div><div style="position:absolute;top:464.95px;font-family:'Liberation Sans', sans-serif;font-size:14px;line-height:14px;font-weight:400;color:#222;white-space:pre;left:445.47px;transform:scaleX(0.9283);transform-origin:left center;">Rule</div><div style="position:absolute;top:501.75px;font-family:'Liberation Sans', sans-serif;font-size:14px;line-height:14px;font-weight:400;color:#333333;white-space:pre;left:329.70px;transform:scaleX(0.9230);transform-origin:left center;">3 months ago</div><div style="position:absolute;top:501.75px;font-family:'Liberation Sans', sans-serif;font-size:14px;line-height:14px;font-weight:400;color:#333333;white-space:pre;left:446.40px;transform:scaleX(0.9115);transform-origin:left center;">#?#.card:has(&gt; .adsbygoogle)</div><div style="position:absolute;top:538.75px;font-family:'Liberation Sans', sans-serif;font-size:14px;line-height:14px;font-weight:400;color:#333333;white-space:pre;left:329.70px;transform:scaleX(0.9230);transform-origin:left center;">3 months ago</div><div style="position:absolute;top:538.75px;font-family:'Liberation Sans', sans-serif;font-size:14px;line-height:14px;font-weight:400;color:#333333;white-space:pre;left:446.40px;transform:scaleX(0.9095);transform-origin:left center;">#?#.row:has(&gt; small &gt; .fa-ad)</div><div style="position:absolute;top:638.57px;font-family:'Liberation Sans', sans-serif;font-size:22.6px;line-height:22.6px;font-weight:400;-webkit-text-stroke:0.997px currentColor;color:#333333;white-space:pre;left:317.20px;transform:scaleX(0.9973);transform-origin:left center;">Proxied resources</div><div style="position:absolute;top:642.28px;font-family:'Liberation Sans', sans-serif;font-size:15.5px;line-height:15.5px;font-weight:700;color:#222;white-space:pre;left:1020.80px;transform:scaleX(1.0086);transform-origin:left center;">Configure</div><div style="position:absolute;top:715.72px;font-family:'Liberation Sans', sans-serif;font-size:19px;line-height:19px;font-weight:400;-webkit-text-stroke:0.838px currentColor;color:#333333;white-space:pre;left:357.93px;transform:scaleX(0.9839);transform-origin:left center;">Proxied <span style="color:#7526d8">23,639</span> requests in 168 hr</div><div style="position:absolute;top:946.95px;font-family:'Liberation Sans', sans-serif;font-size:14px;line-height:14px;font-weight:400;color:#222;white-space:pre;left:730.99px;transform:scaleX(0.9115);transform-origin:left center;">Requests</div><div style="position:absolute;top:946.95px;font-family:'Liberation Sans', sans-serif;font-size:14px;line-height:14px;font-weight:400;color:#222;white-space:pre;left:963.70px;transform:scaleX(0.9843);transform-origin:left center;">Total</div><div style="position:absolute;top:983.95px;font-family:'Liberation Sans', sans-serif;font-size:14px;line-height:14px;font-weight:400;color:#222;white-space:pre;left:329.42px;transform:scaleX(0.8799);transform-origin:left center;">Resources</div><div style="position:absolute;top:983.95px;font-family:'Liberation Sans', sans-serif;font-size:14px;line-height:14px;font-weight:400;color:#222;white-space:pre;left:731.90px;transform:scaleX(0.8721);transform-origin:left center;">2xx</div><div style="position:absolute;top:983.95px;font-family:'Liberation Sans', sans-serif;font-size:14px;line-height:14px;font-weight:400;color:#222;white-space:pre;left:783.30px;transform:scaleX(0.8721);transform-origin:left center;">3xx</div><div style="position:absolute;top:983.95px;font-family:'Liberation Sans', sans-serif;font-size:14px;line-height:14px;font-weight:400;color:#222;white-space:pre;left:828.30px;transform:scaleX(0.8721);transform-origin:left center;">4xx</div><div style="position:absolute;top:983.95px;font-family:'Liberation Sans', sans-serif;font-size:14px;line-height:14px;font-weight:400;color:#222;white-space:pre;left:895.80px;transform:scaleX(0.8721);transform-origin:left center;">5xx</div><div style="position:absolute;top:983.95px;font-family:'Liberation Sans', sans-serif;font-size:14px;line-height:14px;font-weight:400;color:#222;white-space:pre;left:963.30px;transform:scaleX(0.8333);transform-origin:left center;">&Sigma;</div><div style="position:absolute;top:983.95px;font-family:'Liberation Sans', sans-serif;font-size:14px;line-height:14px;font-weight:400;color:#222;white-space:pre;left:1018.90px;transform:scaleX(0.9167);transform-origin:left center;">%</div><div style="position:absolute;top:1020.95px;font-family:'Liberation Sans', sans-serif;font-size:14px;line-height:14px;font-weight:400;color:#333333;white-space:pre;left:353.70px;transform:scaleX(0.9747);transform-origin:left center;">adtrafficquality.google</div><div style="position:absolute;top:1020.95px;font-family:'Liberation Sans', sans-serif;font-size:14px;line-height:14px;font-weight:400;color:#333333;white-space:pre;left:731.90px;transform:scaleX(0.8272);transform-origin:left center;">213</div><div style="position:absolute;top:1020.95px;font-family:'Liberation Sans', sans-serif;font-size:14px;line-height:14px;font-weight:400;color:#333333;white-space:pre;left:783.30px;transform:scaleX(0.8125);transform-origin:left center;">0</div><div style="position:absolute;top:1020.95px;font-family:'Liberation Sans', sans-serif;font-size:14px;line-height:14px;font-weight:400;color:#333333;white-space:pre;left:828.30px;transform:scaleX(0.8125);transform-origin:left center;">0</div><div style="position:absolute;top:1020.95px;font-family:'Liberation Sans', sans-serif;font-size:14px;line-height:14px;font-weight:400;color:#333333;white-space:pre;left:895.80px;transform:scaleX(0.8125);transform-origin:left center;">0</div><div style="position:absolute;top:1020.95px;font-family:'Liberation Sans', sans-serif;font-size:14px;line-height:14px;font-weight:400;color:#333333;white-space:pre;left:963.30px;transform:scaleX(0.8272);transform-origin:left center;">213</div><div style="position:absolute;top:1020.95px;font-family:'Liberation Sans', sans-serif;font-size:14px;line-height:14px;font-weight:400;color:#333333;white-space:pre;left:1018.90px;transform:scaleX(0.8918);transform-origin:left center;">0.90%</div><div style="position:absolute;top:138.24px;font-family:'Liberation Sans', sans-serif;font-size:12px;line-height:12px;font-weight:400;color:#555;white-space:pre;right:772.29px;transform:scaleX(0.8707);transform-origin:right center;">60%</div><div style="position:absolute;top:186.04px;font-family:'Liberation Sans', sans-serif;font-size:12px;line-height:12px;font-weight:400;color:#555;white-space:pre;right:772.29px;transform:scaleX(0.8707);transform-origin:right center;">40%</div><div style="position:absolute;top:234.24px;font-family:'Liberation Sans', sans-serif;font-size:12px;line-height:12px;font-weight:400;color:#555;white-space:pre;right:772.29px;transform:scaleX(0.8707);transform-origin:right center;">20%</div><div style="position:absolute;top:282.24px;font-family:'Liberation Sans', sans-serif;font-size:12px;line-height:12px;font-weight:400;color:#555;white-space:pre;right:772.29px;transform:scaleX(0.8883);transform-origin:right center;">0%</div><div style="position:absolute;top:293.44px;font-family:'Liberation Sans', sans-serif;font-size:12px;line-height:12px;font-weight:400;color:#555;white-space:pre;left:407.60px;transform:scaleX(0.9084);transform-origin:left center;">5/23/25, 08:00</div><div style="position:absolute;top:293.44px;font-family:'Liberation Sans', sans-serif;font-size:12px;line-height:12px;font-weight:400;color:#555;white-space:pre;left:546.90px;transform:scaleX(0.9084);transform-origin:left center;">5/25/25, 05:00</div><div style="position:absolute;top:293.44px;font-family:'Liberation Sans', sans-serif;font-size:12px;line-height:12px;font-weight:400;color:#555;white-space:pre;left:686.00px;transform:scaleX(0.9084);transform-origin:left center;">5/27/25, 02:00</div><div style="position:absolute;top:293.44px;font-family:'Liberation Sans', sans-serif;font-size:12px;line-height:12px;font-weight:400;color:#555;white-space:pre;left:823.00px;transform:scaleX(0.9084);transform-origin:left center;">5/29/25, 08:00</div><div style="position:absolute;top:757.64px;font-family:'Liberation Sans', sans-serif;font-size:12px;line-height:12px;font-weight:400;color:#555;white-space:pre;right:772.28px;transform:scaleX(0.8512);transform-origin:right center;">1000</div><div style="position:absolute;top:779.94px;font-family:'Liberation Sans', sans-serif;font-size:12px;line-height:12px;font-weight:400;color:#555;white-space:pre;right:772.28px;transform:scaleX(0.8453);transform-origin:right center;">800</div><div style="position:absolute;top:802.64px;font-family:'Liberation Sans', sans-serif;font-size:12px;line-height:12px;font-weight:400;color:#555;white-space:pre;right:772.28px;transform:scaleX(0.8453);transform-origin:right center;">600</div><div style="position:absolute;top:825.14px;font-family:'Liberation Sans', sans-serif;font-size:12px;line-height:12px;font-weight:400;color:#555;white-space:pre;right:772.28px;transform:scaleX(0.8453);transform-origin:right center;">400</div><div style="position:absolute;top:847.74px;font-family:'Liberation Sans', sans-serif;font-size:12px;line-height:12px;font-weight:400;color:#555;white-space:pre;right:772.28px;transform:scaleX(0.8453);transform-origin:right center;">200</div><div style="position:absolute;top:870.34px;font-family:'Liberation Sans', sans-serif;font-size:12px;line-height:12px;font-weight:400;color:#555;white-space:pre;right:772.26px;transform:scaleX(0.8000);transform-origin:right center;">0</div><div style="position:absolute;top:881.64px;font-family:'Liberation Sans', sans-serif;font-size:12px;line-height:12px;font-weight:400;color:#555;white-space:pre;left:462.90px;transform:scaleX(0.9084);transform-origin:left center;">5/23/25, 14:00</div><div style="position:absolute;top:881.64px;font-family:'Liberation Sans', sans-serif;font-size:12px;line-height:12px;font-weight:400;color:#555;white-space:pre;left:605.70px;transform:scaleX(0.9084);transform-origin:left center;">5/24/25, 23:00</div><div style="position:absolute;top:881.64px;font-family:'Liberation Sans', sans-serif;font-size:12px;line-height:12px;font-weight:400;color:#555;white-space:pre;left:748.50px;transform:scaleX(0.9084);transform-origin:left center;">5/26/25, 08:00</div><div style="position:absolute;top:881.64px;font-family:'Liberation Sans', sans-serif;font-size:12px;line-height:12px;font-weight:400;color:#555;white-space:pre;left:891.00px;transform:scaleX(0.9084);transform-origin:left center;">5/27/25, 17:00</div><div style="position:absolute;top:881.64px;font-family:'Liberation Sans', sans-serif;font-size:12px;line-height:12px;font-weight:400;color:#555;white-space:pre;left:1029.40px;transform:scaleX(0.9084);transform-origin:left center;">5/29/25, 08:00</div><div style="position:absolute;top:129.74px;font-family:'Liberation Sans', sans-serif;font-size:27px;line-height:27px;font-weight:400;-webkit-text-stroke:1.191px currentColor;color:#111;white-space:pre;left:997.49px;transform:scaleX(1.0143);transform-origin:left center;">32%</div><div style="position:absolute;top:165.53px;font-family:'Liberation Sans', sans-serif;font-size:14.5px;line-height:14.5px;font-weight:400;color:#666;white-space:pre;left:978.81px;transform:scaleX(0.8902);transform-origin:left center;">Page views with</div><div style="position:absolute;top:185.53px;font-family:'Liberation Sans', sans-serif;font-size:14.5px;line-height:14.5px;font-weight:400;color:#666;white-space:pre;left:980.00px;transform:scaleX(0.9238);transform-origin:left center;">content blocker</div><div style="position:absolute;top:484.60px;font-family:'Liberation Sans', sans-serif;font-size:28px;line-height:28px;font-weight:400;-webkit-text-stroke:1.235px currentColor;color:#111;white-space:pre;left:993.81px;transform:scaleX(1.0183);transform-origin:left center;">2 rules</div><div style="position:absolute;top:520.65px;font-family:'Liberation Sans', sans-serif;font-size:14px;line-height:14px;font-weight:400;color:#666;white-space:pre;left:1012.58px;transform:scaleX(0.9195);transform-origin:left center;">In 1 lists</div></body></html>
